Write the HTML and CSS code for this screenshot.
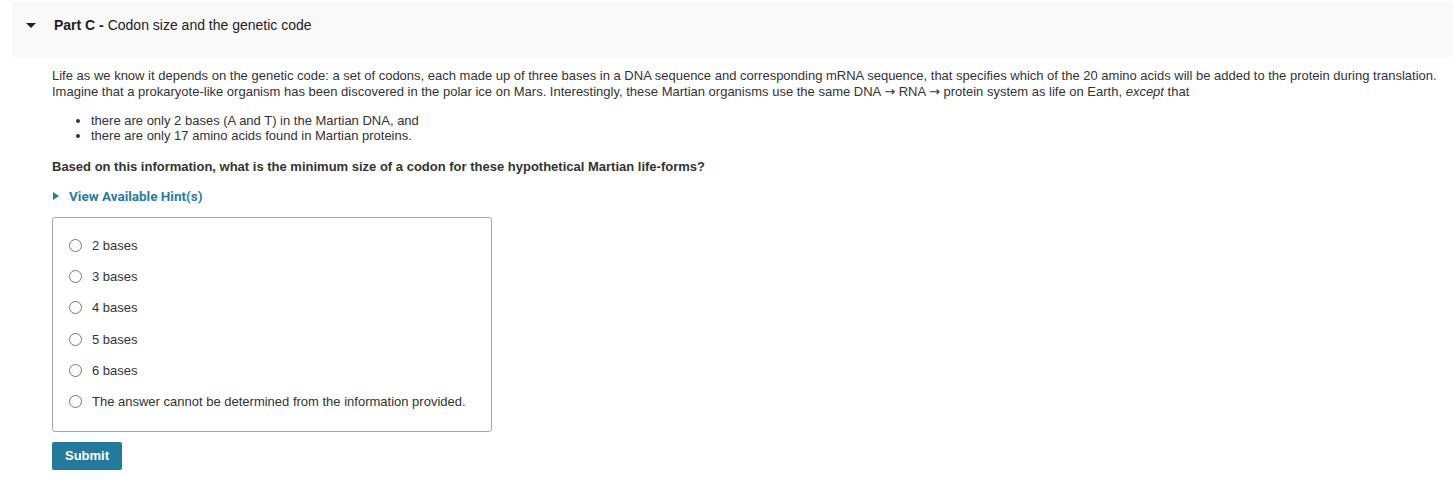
FILE: index.html
```html
<!DOCTYPE html>
<html lang="en">
<head>
  <meta charset="UTF-8">
  <title>Part C - Codon size and the genetic code</title>
  <link rel="stylesheet" href="styles.css">
</head>
<body>
  <div class="part">
    <div class="part-header">
      <span class="caret-down"></span>
      <span class="part-title"><b>Part C -</b> Codon size and the genetic code</span>
    </div>
    <div class="part-body">
      <p class="intro">Life as we know it depends on the genetic code: a set of codons, each made up of three bases in a DNA sequence and corresponding mRNA sequence, that specifies which of the 20 amino acids will be added to the protein during translation. Imagine that a prokaryote-like organism has been discovered in the polar ice on Mars. Interestingly, these Martian organisms use the same DNA <span class="arrow">&rarr;</span> RNA <span class="arrow">&rarr;</span> protein system as life on Earth, <i>except</i> that</p>
      <ul class="facts">
        <li>there are only 2 bases (A and T) in the Martian DNA, and</li>
        <li>there are only 17 amino acids found in Martian proteins.</li>
      </ul>
      <p class="question">Based on this information, what is the minimum size of a codon for these hypothetical Martian life-forms?</p>
      <div class="hint-toggle">
        <span class="caret-right"></span>
        <span>View Available Hint(s)</span>
      </div>
      <div class="options">
        <label class="option"><input type="radio" name="codon"> 2 bases</label>
        <label class="option"><input type="radio" name="codon"> 3 bases</label>
        <label class="option"><input type="radio" name="codon"> 4 bases</label>
        <label class="option"><input type="radio" name="codon"> 5 bases</label>
        <label class="option"><input type="radio" name="codon"> 6 bases</label>
        <label class="option"><input type="radio" name="codon"> The answer cannot be determined from the information provided.</label>
      </div>
      <button class="submit">Submit</button>
    </div>
  </div>
</body>
</html>
```

FILE: styles.css
```css
body {
  margin: 0;
  padding: 1px 0 0 12px;
  font-family: 'Liberation Sans', Arial, sans-serif;
  font-size: 13px;
  color: #333;
  background: #fff;
}

.part-header {
  display: flex;
  align-items: center;
  height: 56px;
  background-color: #f9f9f9;
  padding-left: 14px;
  padding-bottom: 8px;
  box-sizing: border-box;
}

.caret-down {
  width: 0;
  height: 0;
  border-left: 5px solid transparent;
  border-right: 5px solid transparent;
  border-top: 5px solid #222;
  margin-right: 18px;
}

.part-title {
  font-size: 14px;
  color: #222;
}

.part-body {
  padding: 11px 16px 0 40px;
}

.intro {
  margin: 0;
  line-height: 16px;
}

.arrow {
  font-family: 'DejaVu Sans', sans-serif;
  font-size: 13px;
  line-height: 1;
}

.facts {
  margin: 13px 0 0;
  padding-left: 39px;
  line-height: 15px;
}

.question {
  margin: 16px 0 0;
  font-weight: bold;
  line-height: 16px;
}

.hint-toggle {
  display: flex;
  align-items: center;
  margin-top: 13px;
  color: #2a7ba3;
  font-family: Roboto, 'Liberation Sans', sans-serif;
  font-weight: bold;
  font-size: 13.5px;
}

.caret-right {
  width: 0;
  height: 0;
  border-top: 4.5px solid transparent;
  border-bottom: 4.5px solid transparent;
  border-left: 6px solid #2a7ba3;
  margin: 0 10px 0 1px;
}

.options {
  width: 440px;
  box-sizing: border-box;
  margin-top: 13px;
  border: 1px solid #a8a8a8;
  border-radius: 3px;
  padding: 18px 0 20px 16px;
  display: flex;
  flex-direction: column;
  gap: 13.4px;
}

.option {
  display: flex;
  align-items: center;
  height: 18px;
  color: #333;
}

.option input {
  margin: 0 10px 0 0;
  width: 13px;
  height: 13px;
}

.submit {
  margin-top: 10px;
  width: 70px;
  height: 28px;
  border: none;
  border-radius: 2px;
  background-color: #237a9c;
  color: #fff;
  font-family: 'Liberation Sans', Arial, sans-serif;
  font-size: 13px;
  font-weight: bold;
  cursor: pointer;
}
```
